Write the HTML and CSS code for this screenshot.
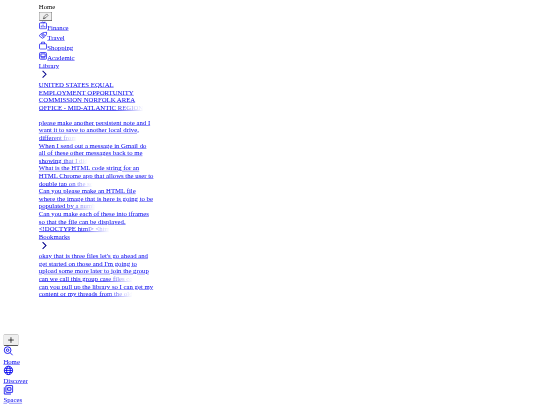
FILE: index.html
```html
<!DOCTYPE html>
<html lang="en">
<head>
<meta charset="utf-8">
<title>Home</title>
<link rel="stylesheet" href="styles.css">
</head>
<body>
<div class="frame">
<div class="page">
<nav class="rail">
  <button class="plain-btn new-btn" type="button"><svg class="btn-icon-lg" viewBox="0 0 24 24"><path d="M12 4v16M4 12h16"/></svg></button>
  <a class="rail-item" href="#"><svg class="rail-icon" viewBox="0 0 24 24"><circle cx="10" cy="10" r="8"/><circle cx="10" cy="10" r="3"/><path d="M16 16l6 6"/></svg><br>Home</a>
  <a class="rail-item" href="#"><svg class="rail-icon" viewBox="0 0 24 24"><circle cx="12" cy="12" r="10"/><ellipse cx="12" cy="12" rx="4.5" ry="10"/><path d="M2 12h20M3.5 7h17M3.5 17h17"/></svg><br>Discover</a>
  <a class="rail-item" href="#"><svg class="rail-icon" viewBox="0 0 24 24"><rect x="6" y="2" width="16" height="16" rx="1"/><path d="M2 6v16h16M10 7h8v6h-8z"/></svg><br>Spaces</a>
</nav>
<main class="panel">
  <div>Home</div>
  <div class="edit-row"><button class="plain-btn edit-btn" type="button"><svg class="btn-icon" viewBox="0 0 24 24"><path d="M4 20l3-8 9-9 5 5-9 9z M4 20l8-3"/></svg></button></div>
  <ul class="topics">
    <li><a href="#"><svg class="topic-icon" viewBox="0 0 24 24"><rect x="2" y="5" width="20" height="17" rx="2"/><path d="M7 18v-5M12 18v-8M17 18v-4M8 5l3-3 3 3 4-3"/></svg>Finance</a></li>
    <li><a href="#"><svg class="topic-icon" viewBox="0 0 24 24"><path d="M1 13C6 6 12 3 23 3c-1 9-6 14-13 17z"/><circle cx="12" cy="11" r="3.5"/></svg>Travel</a></li>
    <li><a href="#"><svg class="topic-icon" viewBox="0 0 24 24"><rect x="2" y="7" width="20" height="15" rx="2"/><path d="M8 7V2h8v5"/></svg>Shopping</a></li>
    <li><a href="#"><svg class="topic-icon" viewBox="0 0 24 24"><rect x="2" y="3" width="20" height="19" rx="3"/><rect x="6" y="7" width="12" height="8"/><path d="M6 18h12"/></svg>Academic</a></li>
  </ul>
  <a class="section-link" href="#">Library</a>
  <div><svg class="chevron" viewBox="0 0 24 24"><path d="M9 4l8 8-8 8"/></svg></div>
  <a class="thread thread-spaced" href="#">UNITED STATES EQUAL EMPLOYMENT OPPORTUNITY COMMISSION NORFOLK AREA <span class="fade">OFFICE - MID-ATLANTIC REGION</span></a>
  <a class="thread" href="#">please make another persistent note and I want it to save to another local drive, <span class="fade">different from</span></a>
  <a class="thread" href="#">When I send out a message in Gmail do all of these other messages back to me <span class="fade">showing that I did</span></a>
  <a class="thread" href="#">What is the HTML code string for an HTML Chrome app that allows the user to <span class="fade">double tap on the sc</span></a>
  <a class="thread" href="#">Can you please make an HTML file<br>where the image that is here is going to be <span class="fade">populated by a numb</span></a>
  <a class="thread" href="#">Can you make each of these into iframes so that the file can be displayed. <span class="fade">&lt;!DOCTYPE html&gt; &lt;htm</span></a>
  <a class="section-link" href="#">Bookmarks</a>
  <div><svg class="chevron" viewBox="0 0 24 24"><path d="M9 4l8 8-8 8"/></svg></div>
  <a class="thread" href="#">okay that is three files let's go ahead and get started on those and I'm going to upload some more later to join the group <span class="fade">can we call this group case files co</span></a>
  <a class="thread" href="#">can you pull up the library so I can get my <span class="fade">content or my threads from the old</span></a>
</main>
</div>
</div>
</body>
</html>
```
FILE: styles.css
```css
* { box-sizing: border-box; }
html, body { margin: 0; }
.frame {
  width: 540px;
  height: 405px;
  overflow: hidden;
  filter: blur(0.2px);
}
.page {
  width: 1280px;
  height: 960px;
  display: flex;
  transform: scale(0.421875);
  transform-origin: top left;
  font-family: "Liberation Serif", "Times New Roman", serif;
  font-size: 16px;
  line-height: 18px;
  color: #000;
}
a { color: #0000ee; text-decoration: underline; }
.rail {
  width: 92px;
  flex: none;
  padding: 0 0 2px 8px;
  display: flex;
  flex-direction: column;
  justify-content: flex-end;
  align-items: flex-start;
}
.rail-item { display: block; }
.rail-icon, .topic-icon, .btn-icon, .btn-icon-lg, .chevron {
  fill: none;
  stroke: currentColor;
  stroke-width: 2;
}
.rail-icon { width: 24px; height: 24px; }
.plain-btn {
  display: block;
  background: #efefef;
  border: 2px outset #a0a0a0;
  border-radius: 3px;
  color: #000;
}
.new-btn { width: 36px; height: 28px; padding: 2px 6px; }
.btn-icon-lg { display: block; width: 20px; height: 20px; }
.panel { width: 274px; padding-top: 8px; }
.edit-row { height: 24px; display: flex; align-items: flex-end; }
.edit-btn { width: 32px; height: 22px; padding: 1px 6px; }
.btn-icon { display: block; width: 16px; height: 16px; color: #333; }
.topics { list-style: none; margin: 0; padding: 0; }
.topic-icon { width: 20px; height: 20px; }
.section-link { display: block; }
.chevron { width: 24px; height: 24px; color: #00008b; stroke-width: 2.5; }
.thread { display: block; }
.thread-spaced { margin-bottom: 18px; }
.fade {
  display: block;
  width: fit-content;
  text-decoration: underline;
  -webkit-mask-image: linear-gradient(to right, #000 calc(100% - 66px), transparent);
  mask-image: linear-gradient(to right, #000 calc(100% - 66px), transparent);
}
```
